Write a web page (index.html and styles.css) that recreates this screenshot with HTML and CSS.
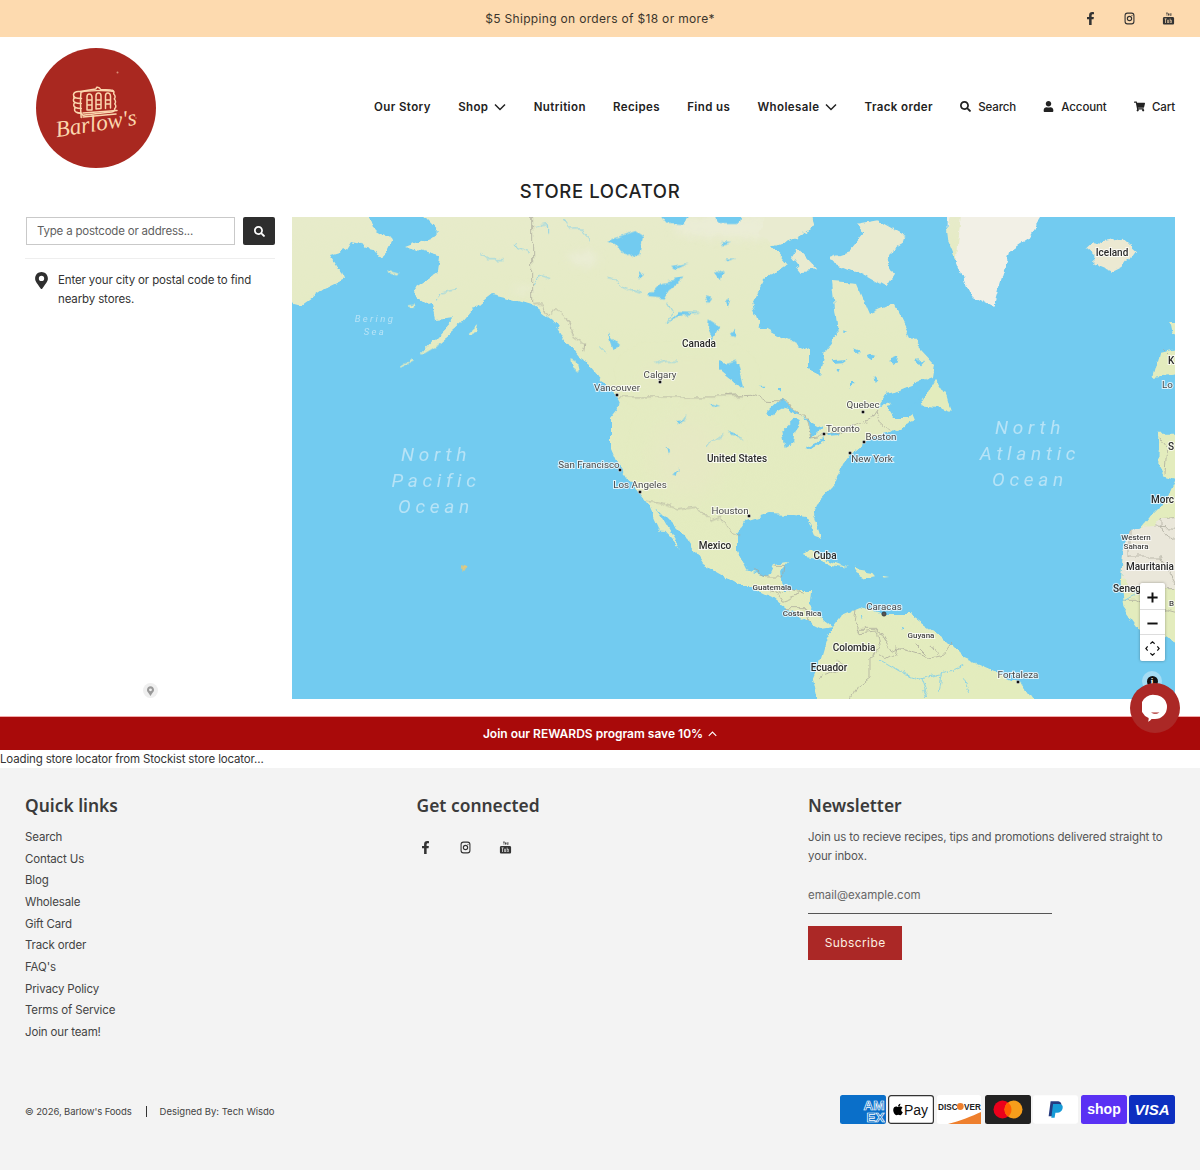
FILE: index.html
```html
<!DOCTYPE html>
<html lang="en">
<head>
<meta charset="utf-8">
<title>Store Locator – Barlow's Foods</title>
<link rel="stylesheet" href="styles.css">
</head>
<body>
<svg class="defs" width="0" height="0" aria-hidden="true">
  <symbol id="i-fb" viewBox="0 0 320 512"><path d="M279.14 288l14.22-92.66h-88.91v-60.13c0-25.35 12.42-50.06 52.24-50.06h40.42V6.26S260.43 0 225.36 0c-73.22 0-121.08 44.38-121.08 124.72v70.62H22.89V288h81.39v224h100.17V288z"/></symbol>
  <symbol id="i-ig" viewBox="0 0 20 20"><rect x="3.2" y="1.8" width="13.6" height="16.4" rx="3.6" fill="none" stroke="currentColor" stroke-width="1.7"/><circle cx="10" cy="10" r="3.3" fill="none" stroke="currentColor" stroke-width="1.7"/><circle cx="13.8" cy="5.4" r=".8"/></symbol>
  <symbol id="i-yt" viewBox="0 0 20 20"><path d="M6 .6l1.2 2.8v2.2h.9V3.4L9.3.6h-.9l-.7 1.8L7 .6zM10.4 2c-.7 0-1 .4-1 1v1.7c0 .6.3 1 1 1s1-.4 1-1V3c0-.6-.3-1-1-1zm1.8 0v3c0 .4.2.7.6.7.3 0 .6-.2.8-.5v.4h.8V2h-.8v2.9c-.2.2-.6.3-.6 0V2z"/><path fill-rule="evenodd" d="M3.6 7.6h12.8c1.3 0 2.2.9 2.2 2.2v7.4c0 1.3-.9 2.2-2.2 2.2H3.6c-1.3 0-2.2-.9-2.2-2.2V9.8c0-1.3.9-2.2 2.2-2.2zM4 10v1h1v6h1.1v-6h1v-1zm4 2v4.2c0 .7.8 1 1.7.2v.6h.9V12h-.9v3.7c-.3.3-.8.5-.8 0V12zm4-2v7h.9v-.4c.8.8 1.9.5 1.9-.6v-2.9c0-1.1-1.1-1.4-1.9-.6V10zm.9 3.400c.4-.3 1-.3 1 .3V16c0 .6-.6.6-1 .3z"/></symbol>
  <symbol id="i-search" viewBox="0 0 512 512"><path d="M505 442.7L405.3 343c-4.5-4.5-10.6-7-17-7H372c27.6-35.3 44-79.7 44-128C416 93.1 322.9 0 208 0S0 93.1 0 208s93.1 208 208 208c48.3 0 92.7-16.4 128-44v16.3c0 6.4 2.5 12.5 7 17l99.7 99.7c9.4 9.4 24.6 9.4 33.9 0l28.3-28.3c9.4-9.4 9.4-24.6.1-34zM208 336c-70.7 0-128-57.2-128-128 0-70.7 57.2-128 128-128 70.7 0 128 57.2 128 128 0 70.7-57.2 128-128 128z"/></symbol>
  <symbol id="i-user" viewBox="0 0 448 512"><path d="M224 256c70.7 0 128-57.3 128-128S294.7 0 224 0 96 57.3 96 128s57.3 128 128 128zm89.6 32h-16.7c-22.2 10.2-46.9 16-72.9 16s-50.6-5.8-72.9-16h-16.7C60.2 288 0 348.2 0 422.4V464c0 26.5 21.5 48 48 48h352c26.5 0 48-21.5 48-48v-41.6c0-74.2-60.2-134.4-134.4-134.4z"/></symbol>
  <symbol id="i-cart" viewBox="0 0 576 512"><path d="M528.12 301.319l47.273-208C578.806 78.301 567.391 64 551.99 64H159.208l-9.166-44.81C147.758 8.021 137.93 0 126.529 0H24C10.745 0 0 10.745 0 24v16c0 13.255 10.745 24 24 24h69.883l70.248 343.435C147.325 417.1 136 435.222 136 456c0 30.928 25.072 56 56 56s56-25.072 56-56c0-15.674-6.447-29.835-16.824-40h209.647C430.447 426.165 424 440.326 424 456c0 30.928 25.072 56 56 56s56-25.072 56-56c0-22.172-12.888-41.332-31.579-50.405l5.517-24.276c3.413-15.018-8.002-29.319-23.403-29.319H218.117l-6.545-32h293.145c11.206 0 20.92-7.754 23.403-18.681z"/></symbol>
  <symbol id="i-chev" viewBox="0 0 12 8"><path d="M1 1.5l5 5 5-5" fill="none" stroke="currentColor" stroke-width="1.5"/></symbol>
  <symbol id="i-pin" viewBox="0 0 384 512"><path fill-rule="evenodd" d="M172 502C27 291 0 269 0 192 0 86 86 0 192 0s192 86 192 192c0 77-27 99-172 310-10 14-30 14-40 0zm20-230a80 80 0 1 0 0-160 80 80 0 0 0 0 160z"/></symbol>
</svg>

<div class="announce">
  <p class="announce-text">$5 Shipping on orders of $18 or more*</p>
  <div class="announce-social">
    <svg class="ico"><use href="#i-fb"/></svg>
    <svg class="ico"><use href="#i-ig"/></svg>
    <svg class="ico"><use href="#i-yt"/></svg>
  </div>
</div>

<header class="site-header">
  <svg class="logo" viewBox="0 0 120 120" role="img" aria-label="Barlow's">
    <circle cx="60" cy="60" r="60" fill="#a92820"/>
    <g fill="none" stroke="#fbd6ae" stroke-width="1.5" stroke-linecap="round" stroke-linejoin="round">
      <path d="M44 43.500c-4-.5-6 .5-6.500 3-.2 1.500.5 2.500 1.500 3-2 1-2.300 4 0 5-2 1.500-1.500 4 .3 5-1.500 2-.8 4.500 1.700 5l4.500 1c.5 1.500 1.500 2 3 1.500l27-3c2.500-.5 3.500-1.500 3.200-3.500 1.500-1 1.500-3.500 0-4.500 1.300-1.500 1-4-.5-5 1.500-1.500 1-4-.5-5 .8-2.500-.5-4-3-4l-10-.5c-1-2-2.500-2.500-4-2.200l-1 1.800z"/>
      <path d="M38 49.500c3 .8 6 1 7.500 1M38.800 54.500c2 .8 4 1 6.500 1M39.300 59.500c2 .8 4 1 6 1M41 64.500l4.500 1M45 44c-.8 7-.5 17 .2 25.500M45.500 44c6-1.500 24-2 32-.5"/>
      <path d="M51 62V49c0-4 4.500-4 5 0v13zM60 61V48c0-4 5-4 5 0v12.500zM69.500 60.500V48c0-4 4.500-4 5 0v12M51 52h5M60 52h5M69.500 52h5M51 57h5M60 56.500h5M69.500 56h5M47 65l34-2.500M47 69l33-3"/>
    </g>
    <circle cx="81.500" cy="24.500" r="1" fill="#d98f76"/>
    <circle cx="100" cy="70" r=".7" fill="#d98f76"/>
    <text class="logo-word" x="60" y="83" transform="rotate(-9 60 76)">Barlow's</text>
  </svg>
  <nav class="main-nav">
    <a class="nav-link">Our Story</a>
    <a class="nav-link">Shop<svg class="nav-chev"><use href="#i-chev"/></svg></a>
    <a class="nav-link">Nutrition</a>
    <a class="nav-link">Recipes</a>
    <a class="nav-link">Find us</a>
    <a class="nav-link">Wholesale<svg class="nav-chev"><use href="#i-chev"/></svg></a>
    <a class="nav-link">Track order</a>
    <a class="nav-link tight"><svg class="nav-ico"><use href="#i-search"/></svg>Search</a>
    <a class="nav-link tight"><svg class="nav-ico"><use href="#i-user"/></svg>Account</a>
    <a class="nav-link tight"><svg class="nav-ico"><use href="#i-cart"/></svg>Cart</a>
  </nav>
</header>

<main class="locator">
  <h1 class="locator-title">STORE LOCATOR</h1>
  <div class="locator-body">
    <aside class="side">
      <form class="search-row">
        <input class="search-input" type="text" placeholder="Type a postcode or address...">
        <button class="search-btn" type="button" aria-label="Search"><svg class="search-btn-ico"><use href="#i-search"/></svg></button>
      </form>
      <div class="hint">
        <svg class="hint-pin"><use href="#i-pin"/></svg>
        <p class="hint-text">Enter your city or postal code to find nearby stores.</p>
      </div>
      <div class="side-foot"><span class="mini-pin"><svg class="mini-pin-ico"><use href="#i-pin"/></svg></span></div>
    </aside>
    <div class="map">
      <svg class="map-svg" viewBox="0 0 883 482" aria-label="Map of North America and the Atlantic">
        <defs>
          <linearGradient id="landGrad" gradientUnits="userSpaceOnUse" x1="0" y1="0" x2="0" y2="482">
            <stop offset="0" stop-color="#e7ebca"/><stop offset=".3" stop-color="#e4ebc2"/><stop offset="1" stop-color="#e3ecbd"/>
          </linearGradient>
          <filter id="rough" filterUnits="userSpaceOnUse" x="-20" y="-20" width="923" height="522" color-interpolation-filters="sRGB">
            <feTurbulence type="fractalNoise" baseFrequency=".07" numOctaves="4" seed="7" result="n"/>
            <feDisplacementMap in="SourceGraphic" in2="n" scale="9" xChannelSelector="R" yChannelSelector="G"/>
          </filter>
          <filter id="soft" x="-40%" y="-40%" width="180%" height="180%"><feGaussianBlur stdDeviation="4"/></filter>
          <filter id="softer" x="-40%" y="-40%" width="180%" height="180%"><feGaussianBlur stdDeviation="12"/></filter>
          <clipPath id="mainClip"><polygon points="123,-10 148,17 113,30 125,34 147,40 145,55 123,70 125,80 140,90 143,102 163,100 128,137 147,127 170,107 187,87 200,77 213,80 240,88 260,103 273,123 287,140 297,147 310,163 323,177 328,190 320,200 320,230 330,253 348,277 358,290 393,320 410,347 433,360 450,370 518,407 541,410 520,373 496,345 445,333 445,317 475,297 515,300 525,287 541,270 558,237 595,217 621,200 595,190 641,160 618,120 601,87 540,65 546,117 528,160 481,117 460,87 495,47 505,20 518,-10"/></clipPath>
        </defs>
        <rect class="water" width="883" height="482"/>
        <g filter="url(#rough)">
          <polygon class="land" points="-10,-10 72,-10 80,12 100,23 90,43 80,30 60,25 55,33 38,38 50,57 52,63 33,72 10,88 -10,83"/>
          <polygon class="land" points="123,-10 148,17 113,30 125,34 147,40 145,55 123,70 125,80 140,90 143,102 163,100 128,137 147,127 170,107 187,87 200,77 213,80 240,88 260,103 273,123 287,140 297,147 310,163 323,177 328,190 320,200 320,230 330,253 348,277 358,290 367,310 388,333 363,290 393,320 410,347 433,360 450,370 461,370 481,380 498,393 518,407 528,412 541,410 518,392 520,373 491,373 489,353 496,345 481,347 475,360 455,353 445,333 445,317 455,303 475,297 501,298 515,300 523,320 529,322 521,297 525,287 541,270 550,247 558,237 571,227 595,217 621,200 601,200 595,190 608,187 598,177 615,170 641,160 643,147 618,120 601,87 578,97 565,67 540,65 546,117 533,133 528,160 518,150 518,133 481,117 468,110 460,87 471,63 495,47 481,30 505,20 521,10 518,-10"/>
          <polygon class="land" points="541,410 533,425 527,445 520,462 526,492 748,492 731,467 701,453 671,440 651,420 618,397 591,397 568,390 551,397"/>
          <g clip-path="url(#mainClip)">
            <g class="tone-ice" filter="url(#soft)">
              <ellipse cx="292" cy="42" rx="16" ry="7"/><ellipse cx="232" cy="72" rx="12" ry="3"/><ellipse cx="440" cy="10" rx="60" ry="12"/>
            </g>
            <g class="tone-dry" filter="url(#softer)">
              <ellipse cx="395" cy="240" rx="35" ry="40"/><ellipse cx="395" cy="160" rx="50" ry="10"/>
            </g>
          </g>
          <g transform="translate(438,0) scale(.33333)">
            <polygon class="land pale" points="300,120 360,100 400,50 380,20 440,10 530,60 490,90 470,130 495,170 470,210 400,170 300,130"/>
            <polygon class="land pale" points="180,120 200,90 265,160 215,165"/>
            <polygon class="land pale" points="120,-30 230,-30 250,30 200,60 130,85 90,50"/>
            <polygon class="land" points="570,565 615,485 650,540 662,585 620,570"/>
            <polygon class="land" points="547,590 555,610 520,625 490,640 520,610"/>
            <polygon class="land" points="215,1015 250,1000 300,1030 352,1050 300,1040 260,1022"/>
            <polygon class="land" points="368,1055 430,1065 438,1075 400,1082 380,1072"/>
            <polygon class="land" points="455,1076 478,1080 458,1082"/>
            <polygon class="ice" points="650,30 650,-30 955,-30 900,60 840,100 810,200 790,270 720,235 680,130"/>
            <polygon class="land" points="650,30 675,-30 695,-30 680,130 655,70"/>
            <polygon class="pale-ice" points="1070,92 1092,72 1120,78 1180,68 1215,100 1180,150 1150,165 1090,140 1090,110"/>
            <polygon class="land" points="1270,480 1290,410 1360,395 1360,470"/>
            <polygon class="land" points="1318,315 1360,315 1360,360 1325,350"/>
            <polygon class="land" points="1285,650 1360,650 1360,792 1300,775 1282,740"/>
            <polygon class="land" points="1460,780 1335,795 1310,850 1270,890 1180,1000 1172,1100 1180,1170 1230,1240 1335,1275 1460,1300"/>
            <polygon class="ice-warm" points="1360,900 1290,905 1270,930 1200,935 1180,1000 1175,1080 1200,1115 1335,1115 1460,1115 1460,890"/>
            <g class="lakes">
              <polygon points="105,590 150,548 215,590 160,575 130,592"/>
              <polygon points="170,690 160,640 195,605 215,615 190,650 187,680"/>
              <polygon points="220,600 280,630 245,662 240,620"/>
              <polygon points="228,690 282,664 282,672 240,693"/>
              <polygon points="285,655 330,645 325,657 292,660"/>
              <polygon points="305,430 350,425 335,436 310,438"/><polygon points="410,412 436,416 428,434 414,430"/>
              <polygon points="478,428 505,418 500,440 485,442"/><polygon points="555,432 580,428 568,442"/>
              <polygon points="320,456 332,456 328,466"/><polygon points="430,478 442,490 434,498"/><polygon points="360,492 376,492 360,512"/>
              <polygon points="142,516 158,516 154,528"/><polygon points="86,506 106,506 102,514"/><polygon points="340,340 352,345 340,348"/><polygon points="370,396 390,404 375,408"/>
              <polygon points="-30,430 25,440 42,510 20,500 -30,460"/>
              <polygon points="390,1192 398,1200 392,1210"/><polygon points="515,1232 523,1236 519,1246"/>
            </g>
            <polygon class="water" points="440,575 470,530 540,515 590,520 560,560 520,585 490,585 480,555"/>
            <g class="border">
              <polyline points="-20,538 60,535 110,550 160,552 215,590 235,605 245,660 285,655 330,645 395,620 420,610 440,580 450,610 480,640"/>
              <polyline points="70,1060 110,1080 160,1080 165,1045 130,1045"/>
              <polyline points="100,1110 140,1125 165,1115 225,1125"/>
              <polyline points="140,1125 155,1150 210,1130"/>
              <polyline points="170,1175 225,1175 235,1220"/>
              <polyline points="375,1175 370,1210 390,1250 440,1245 450,1300 420,1320 420,1380"/>
              <polyline points="385,1240 445,1240 480,1300 500,1290 540,1300 600,1320 640,1310 670,1270"/>
              <polyline points="500,1290 495,1310 470,1325 450,1310"/>
              <polyline points="560,1280 590,1310"/>
              <polyline points="600,1280 620,1310"/>
              <polyline points="320,1330 350,1345 300,1370 270,1380"/>
              <polyline points="420,1380 380,1410 360,1460"/>
              <polyline points="1270,930 1360,935 1360,970"/><polyline points="1360,900 1290,905 1290,935 1335,970"/>
              <polyline points="1200,935 1200,1020 1290,1020 1335,1100"/><polyline points="1175,1115 1360,1115"/>
              <polyline points="1180,1150 1220,1150 1245,1165 1360,1195"/>
              <polyline points="1290,660 1310,690 1305,770"/><polyline points="1300,400 1320,420"/>
            </g>
            <g class="river">
              <polyline points="450,1330 510,1365 570,1385 640,1370 700,1345"/>
              <polyline points="640,1370 630,1420"/><polyline points="570,1385 590,1440"/><polyline points="700,1390 720,1425"/>
              <polyline points="1175,1120 1230,1130 1180,1150"/>
            </g>
          </g>
          <g transform="scale(.33333)">
            <g class="lakes">
              <polygon points="945,72 1030,42 1056,60 1048,110 1000,120 975,90"/>
              <polygon points="1068,240 1110,195 1178,180 1130,218 1115,245"/>
              <polygon points="1128,310 1160,285 1220,288 1160,298"/>
              <polygon points="1288,440 1332,428 1348,510 1322,480"/>
              <polygon points="1085,-30 1205,-30 1180,25 1120,20"/><polygon points="1260,-30 1350,-30 1340,15 1280,15"/>
              <polygon points="1275,170 1295,160 1290,190"/><polygon points="1040,160 1060,170 1045,180"/><polygon points="1140,150 1190,140 1150,158"/>
              <polygon points="1235,240 1255,245 1245,258"/><polygon points="1305,250 1320,245 1310,275"/><polygon points="1250,310 1282,330 1262,370 1248,340"/>
              <polygon points="1310,355 1330,335 1325,360"/><polygon points="1285,75 1315,78 1290,85"/><polygon points="1300,125 1330,125 1310,132"/>
              <polygon points="950,350 985,385 965,395"/><polygon points="1120,690 1135,700 1128,708"/><polygon points="1140,775 1158,755 1150,778"/>
              <polygon points="1255,560 1285,570 1265,572"/><polygon points="1150,610 1180,605 1155,618"/>
              <polygon points="1310,645 1350,665 1325,660"/><polygon points="965,530 985,560 980,575 965,545"/>
            </g>
            <g class="river">
              <polyline points="815,10 830,30 860,30 895,70"/><polyline points="672,75 680,95 705,110"/><polyline points="565,110 590,125 635,125"/>
              <polyline points="945,180 970,185 990,210 1050,230"/><polyline points="730,25 770,20 770,50"/><polyline points="725,205 740,175 775,185"/>
              <polyline points="435,245 445,225 495,215"/><polyline points="1125,260 1140,285 1128,310"/><polyline points="925,395 940,412"/>
              <polyline points="1085,440 1120,430 1155,430"/><polyline points="1150,620 1180,600"/><polyline points="1245,690 1300,650"/>
            </g>
            <polygon class="land" points="285,160 320,170 315,176 290,168"/>
            <polygon class="land" points="530,345 562,315 555,345 535,352"/>
            <polygon class="land" points="385,412 430,380 440,385 395,412"/>
            <polygon class="land" points="325,447 355,428 360,432 330,449"/>
            <polygon class="land" points="835,423 850,430 858,465 840,450"/>
            <polygon class="hawaii" points="510,1050 524,1058 512,1065"/>
            <polygon class="land" points="350,262 368,260 370,272 355,272"/>
            <g class="border">
              <polyline points="722,-30 722,258"/>
              <polyline points="722,260 745,258 770,295 795,275 820,300 850,360 878,375 875,405"/>
              <polyline points="975,540 1350,540"/>
              <polyline points="1062,850 1100,855 1160,873 1215,865 1255,910 1285,898 1320,950 1345,960"/>
            </g>
          </g>
        </g>
        <text class="ocean ocean-sm" x="83" y="105">Bering</text>
        <text class="ocean ocean-sm" x="83" y="118">Sea</text>
        <text class="ocean" x="144" y="244">North</text>
        <text class="ocean" x="144" y="270">Pacific</text>
        <text class="ocean" x="144" y="296">Ocean</text>
        <text class="ocean" x="738" y="217">North</text>
        <text class="ocean" x="738" y="243">Atlantic</text>
        <text class="ocean" x="738" y="269">Ocean</text>
        <text class="country" x="407" y="130">Canada</text>
        <text class="country" x="445" y="245">United States</text>
        <text class="country" x="423" y="332">Mexico</text>
        <text class="country" x="533" y="342">Cuba</text>
        <text class="country" x="820" y="39">Iceland</text>
        <text class="country" x="562" y="434">Colombia</text>
        <text class="country" x="537" y="454">Ecuador</text>
        <text class="country" x="858" y="353">Mauritania</text>
        <text class="country start" x="821" y="375">Seneg</text>
        <text class="country start" x="859" y="286">Morc</text>
        <text class="country start" x="876" y="147">K</text>
        <text class="country start" x="876" y="233">S</text>
        <text class="country small start" x="877" y="389">B</text>
        <text class="country small" x="480" y="373">Guatemala</text>
        <text class="country small" x="510" y="399">Costa Rica</text>
        <text class="country small" x="629" y="421">Guyana</text>
        <text class="country small" x="844" y="323">Western</text>
        <text class="country small" x="844" y="332">Sahara</text>
        <text class="city" x="368" y="161">Calgary</text>
        <text class="city" x="325" y="174">Vancouver</text>
        <text class="city" x="297" y="251">San Francisco</text>
        <text class="city" x="348" y="271">Los Angeles</text>
        <text class="city" x="438" y="297">Houston</text>
        <text class="city" x="571" y="191">Quebec</text>
        <text class="city" x="551" y="215">Toronto</text>
        <text class="city" x="589" y="223">Boston</text>
        <text class="city" x="580" y="245">New York</text>
        <text class="city" x="592" y="393">Caracas</text>
        <text class="city" x="726" y="461">Fortaleza</text>
        <text class="city start" x="870" y="171">Lo</text>
        <g class="dots">
          <circle cx="368" cy="165" r="1.8"/><circle cx="325" cy="178" r="1.8"/><circle cx="328" cy="253" r="1.8"/><circle cx="348" cy="275" r="1.8"/>
          <circle cx="457" cy="299" r="1.8"/><circle cx="571" cy="195" r="1.8"/><circle cx="532" cy="217" r="1.8"/><circle cx="572" cy="225" r="1.8"/>
          <circle cx="558" cy="236" r="1.8"/><circle cx="726" cy="465" r="1.8"/>
          <circle class="capital" cx="592" cy="397" r="2.2"/>
        </g>
      </svg>
      <div class="map-ctrl">
        <button class="map-btn" type="button" aria-label="Zoom in"><svg class="map-btn-ico" viewBox="0 0 14 14"><path d="M7 1.500v11M1.500 7h11"/></svg></button>
        <button class="map-btn" type="button" aria-label="Zoom out"><svg class="map-btn-ico" viewBox="0 0 14 14"><path d="M1.500 7h11"/></svg></button>
        <button class="map-btn" type="button" aria-label="Reset"><svg class="map-btn-ico fine" viewBox="0 0 14 14"><path d="M5 2.500L7 .8l2 1.700M5 11.500l2 1.700 2-1.700M2.500 5L.8 7l1.700 2M11.500 5l1.700 2-1.700 2"/></svg></button>
      </div>
      <span class="map-info"><span class="map-info-dot">i</span></span>
    </div>
  </div>
</main>

<div class="rewards">Join our REWARDS program save 10%<svg class="rewards-chev"><use href="#i-chev"/></svg></div>
<p class="loading">Loading store locator from Stockist store locator...</p>

<footer class="site-footer">
  <div class="foot-cols">
    <section class="foot-col">
      <h3 class="foot-h">Quick links</h3>
      <ul class="foot-links">
        <li>Search</li><li>Contact Us</li><li>Blog</li><li>Wholesale</li><li>Gift Card</li><li>Track order</li><li>FAQ's</li><li>Privacy Policy</li><li>Terms of Service</li><li>Join our team!</li>
      </ul>
    </section>
    <section class="foot-col">
      <h3 class="foot-h">Get connected</h3>
      <div class="foot-social">
        <svg class="ico"><use href="#i-fb"/></svg>
        <svg class="ico"><use href="#i-ig"/></svg>
        <svg class="ico"><use href="#i-yt"/></svg>
      </div>
    </section>
    <section class="foot-col">
      <h3 class="foot-h">Newsletter</h3>
      <p class="foot-p">Join us to recieve recipes, tips and promotions delivered straight to your inbox.</p>
      <input class="foot-input" type="email" placeholder="email@example.com">
      <button class="foot-btn" type="button">Subscribe</button>
    </section>
  </div>
  <div class="foot-bottom">
    <p class="legal"><span class="legal-a">© 2026, Barlow's Foods</span><span class="legal-b">Designed By: Tech Wisdo</span></p>
    <div class="pays">
      <svg class="pay" viewBox="0 0 46 29"><rect width="46" height="29" rx="2.5" fill="#0a6fc9"/><text class="pay-amex"><tspan x="44.5" y="14.500">AM</tspan><tspan x="44.5" y="26.500">EX</tspan></text></svg>
      <svg class="pay" viewBox="0 0 46 29"><rect x=".6" y=".6" width="44.8" height="27.8" rx="2.5" fill="#fff" stroke="#333" stroke-width="1.2"/><svg x="5" y="8" width="10" height="13" viewBox="0 0 384 512"><path d="M318.7 268.7c-.2-36.7 16.4-64.4 50-84.8-18.8-26.9-47.2-41.7-84.7-44.6-35.5-2.8-74.3 20.7-88.5 20.7-15 0-49.4-19.7-76.4-19.7C63.3 141.2 4 184.8 4 273.5q0 39.3 14.4 81.2c12.8 36.7 59 126.7 107.2 125.2 25.2-.6 43-17.9 75.8-17.9 31.8 0 48.3 17.9 76.4 17.9 48.6-.7 90.4-82.5 102.6-119.3-65.2-30.7-61.7-90-61.7-91.9zm-56.6-164.2c27.3-32.4 24.8-61.9 24-72.5-24.1 1.4-52 16.4-67.9 34.9-17.5 19.8-27.8 44.3-25.6 71.9 26.1 2 49.9-11.4 69.5-34.3z"/></svg><text class="pay-apple" x="16" y="20">Pay</text></svg>
      <svg class="pay pay-narrow" viewBox="0 0 44 29"><rect width="44" height="29" rx="2.5" fill="#fff"/><path d="M11 29c12-3 24-8 33-12v12z" fill="#ee7f2d"/><text class="pay-disc" x="1" y="14.5">DISC</text><circle cx="23.3" cy="11.5" r="3.4" fill="#ee7f2d"/><text class="pay-disc" x="27" y="14.5">VER</text></svg>
      <svg class="pay" viewBox="0 0 46 29"><rect width="46" height="29" rx="2.5" fill="#222"/><circle cx="17.5" cy="14.5" r="9" fill="#eb001b"/><circle cx="28.5" cy="14.5" r="9" fill="#f79e1b"/><path d="M23 7.400a9 9 0 0 1 0 14.200 9 9 0 0 1 0-14.200z" fill="#ff5f00"/></svg>
      <svg class="pay pay-paypal" viewBox="0 0 46 29"><rect width="46" height="29" rx="2.5" fill="#fff"/><path d="M18 6h6.500c3.500 0 5 1.800 4.400 4.600-.7 3.300-3 4.900-6 4.900h-2l-.9 6H16z" fill="#253b80"/><path d="M20.500 9h6c3.200 0 4.400 1.700 3.800 4.300-.6 3-2.700 4.500-5.500 4.500h-1.900l-.8 5.200h-3.400z" fill="#179bd7"/></svg>
      <svg class="pay" viewBox="0 0 46 29"><rect width="46" height="29" rx="2.5" fill="#5a31f4"/><text class="pay-shop" x="23" y="19">shop</text></svg>
      <svg class="pay" viewBox="0 0 46 29"><rect width="46" height="29" rx="2.5" fill="#0d2fc0"/><text class="pay-visa" x="23" y="20">VISA</text></svg>
    </div>
  </div>
</footer>

<button class="chat" type="button" aria-label="Open chat">
  <svg class="chat-ico" viewBox="0 0 26 28"><path d="M13 1a12 12 0 0 1 0 24H9.500c-1 1.500-2.200 2.300-3.500 2.700.6-1.200.8-2.300.6-3.700A12 12 0 0 1 13 1z" fill="#fff"/><path d="M9 18.500c2.500 1.800 6 1.800 8.500 0z" fill="#ab2826"/></svg>
</button>
</body>
</html>
```
FILE: styles.css
```css
* { box-sizing: border-box; }
html, body { margin: 0; padding: 0; }
body {
  position: relative;
  width: 1200px;
  height: 1170px;
  overflow: hidden;
  background: #fff;
  color: #333;
  font-family: Inter, "Liberation Sans", sans-serif;
  font-size: 12px;
}
p, h1, h3, ul { margin: 0; padding: 0; }
.defs { position: absolute; }
.ico { width: 13px; height: 13px; fill: currentColor; color: #333; display: block; }

/* announcement */
.announce {
  position: relative;
  height: 37px;
  background: #fddaaf;
  display: flex;
  align-items: center;
  justify-content: center;
}
.announce-text { font-size: 12px; letter-spacing: .32px; color: #3c352c; }
.announce-social {
  position: absolute;
  right: 25px;
  top: 12px;
  display: flex;
  gap: 26px;
}

/* header */
.site-header {
  height: 141px;
  display: flex;
  align-items: center;
  justify-content: space-between;
  padding: 0 25px 0 36px;
}
.logo { width: 120px; height: 120px; display: block; }
.logo-word {
  font-family: "Liberation Serif", serif;
  font-style: italic;
  font-size: 23px;
  fill: #fbd6ae;
  text-anchor: middle;
}
.main-nav { display: flex; align-items: center; gap: 27.2px; transform: translateY(-1px); }
.nav-link {
  display: flex;
  align-items: center;
  font-size: 11.5px;
  font-weight: 600;
  letter-spacing: .4px;
  color: #222;
  white-space: nowrap;
}
.nav-link.tight { letter-spacing: -.1px; font-weight: 500; }
.nav-chev { width: 12px; height: 8px; margin-left: 6px; color: #222; }
.nav-ico { width: 11px; height: 11px; margin-right: 7px; fill: #222; }

/* locator */
.locator { height: 538px; }
.locator-title {
  height: 39px;
  text-align: center;
  font-size: 18.5px;
  line-height: 26px;
  font-weight: 500;
  letter-spacing: .65px;
  color: #222;
}
.locator-body { display: flex; padding: 0 25px; gap: 17px; height: 482px; }
.side { width: 250px; display: flex; flex-direction: column; }
.search-row {
  display: flex;
  justify-content: space-between;
  padding: 0 0 13px 1px;
  border-bottom: 1px solid #eee;
  margin: 0;
}
.search-input {
  width: 209px;
  height: 28px;
  border: 1px solid #c9c9c9;
  padding: 0 10px;
  font: 11.5px Inter, "Liberation Sans", sans-serif;
  letter-spacing: -.2px;
  color: #333;
  background: #fff;
  outline: 0;
}
.search-input::placeholder { color: #5f5f5f; opacity: 1; }
.search-btn {
  width: 32px;
  height: 28px;
  background: #2e2e2e;
  border: 0;
  border-radius: 2px;
  padding: 0;
  display: flex;
  align-items: center;
  justify-content: center;
}
.search-btn-ico { width: 11px; height: 11px; fill: #fff; }
.hint { display: flex; padding: 12px 0 0 10px; gap: 10px; }
.hint-pin { width: 13px; height: 17px; fill: #2f2f2f; flex: none; margin-top: 1px; }
.hint-text { font-size: 11.5px; letter-spacing: -.13px; line-height: 19px; color: #333; width: 196px; }
.side-foot { margin-top: auto; display: flex; justify-content: center; padding-bottom: 1px; }
.mini-pin {
  width: 15px; height: 15px; border-radius: 50%; background: #efefef;
  display: flex; align-items: center; justify-content: center;
}
.mini-pin-ico { width: 7px; height: 10px; fill: #999; }

/* map */
.map { position: relative; width: 883px; height: 482px; }
.map-svg { display: block; width: 883px; height: 482px; overflow: hidden; font-family: Roboto, "Liberation Sans", sans-serif; }
.water { fill: #72cbf0; }
.land { fill: url(#landGrad); stroke: none; }
.land.pale { fill: #e9ebd0; }
.ice { fill: #f2f0e6; }
.pale-ice { fill: #ece9d2; }
.ice-warm { fill: #eae7da; }
.hawaii { fill: #e3c97c; }
.tone-ice ellipse { fill: #efeee0; opacity: .55; }
.tone-dry ellipse { fill: #eae8c8; opacity: .5; }
.lakes polygon { fill: #72cbf0; }
.border polyline { fill: none; stroke: #a9a79a; stroke-width: 2.2; }
.river polyline { fill: none; stroke: #72cbf0; stroke-width: 2.2; }
.ocean {
  fill: #b7e3f6;
  font-size: 19px;
  font-style: italic;
  letter-spacing: 4.7px;
  text-anchor: middle;
}
.ocean-sm { font-size: 9.5px; letter-spacing: 2.4px; }
.country, .city {
  text-anchor: middle;
  paint-order: stroke;
  stroke: rgba(255,255,255,.75);
  stroke-width: 2px;
}
.country.start, .city.start { text-anchor: start; }
.country { font-size: 10px; font-weight: 500; fill: #2a2a2a; }
.country.small { font-size: 8px; fill: #444; }
.city { font-size: 9.8px; fill: #4a4a4a; }
.dots circle { fill: #111; stroke: #fff; stroke-width: .5; }
.dots .capital { fill: #555; stroke: #222; }
.map-ctrl {
  position: absolute;
  left: 848px;
  top: 366px;
  width: 25px;
  background: #fff;
  border-radius: 2px;
  box-shadow: 0 0 3px rgba(0,0,0,.35);
  display: flex;
  flex-direction: column;
}
.map-btn {
  height: 25px;
  background: transparent;
  border: 0;
  border-bottom: 1px solid #ddd;
  padding: 2px 0 0;
  display: flex;
  align-items: center;
  justify-content: center;
}
.map-btn:first-child { height: 27px; padding-top: 3px; }
.map-btn:last-child { height: 26px; border-bottom: 0; padding: 0; }
.map-btn-ico { width: 13px; height: 13px; fill: none; stroke: #111; stroke-width: 2.1; }
.map-btn-ico.fine { width: 15px; height: 15px; stroke-width: 1.1; }
.map-info {
  position: absolute;
  left: 850px;
  top: 454px;
  width: 20px;
  height: 20px;
  border-radius: 50%;
  background: #a5dcf3;
  display: flex;
  align-items: center;
  justify-content: center;
}
.map-info-dot {
  width: 11px; height: 11px; border-radius: 50%;
  background: #111; color: #fff;
  font: 700 9px/11px "Liberation Serif", serif;
  text-align: center;
}

/* rewards */
.rewards {
  height: 34px;
  background: #a90a0a;
  border-top: 1px solid #f3a9a9;
  color: #fff;
  font-size: 12px;
  font-weight: 600;
  display: flex;
  align-items: center;
  justify-content: center;
}
.rewards-chev { width: 9px; height: 6px; margin-left: 5px; color: #fff; transform: rotate(180deg); }
.loading { height: 18px; line-height: 18px; font-size: 11.5px; letter-spacing: -.15px; color: #333; }

/* footer */
.site-footer { height: 402px; background: #f3f3f3; padding: 0 25px; position: relative; }
.foot-cols { display: flex; height: 290px; padding-top: 25px; }
.foot-col { width: 391.67px; }
.foot-col:last-child { width: 367px; }
.foot-h {
  font-family: "Noto Sans", "Liberation Sans", sans-serif;
  font-size: 17.4px;
  font-weight: 600;
  line-height: 24px;
  color: #3b3b3b;
}
.foot-links { list-style: none; margin-top: 10px; }
.foot-links li { height: 21.67px; line-height: 21.67px; font-size: 11.5px; letter-spacing: -.15px; color: #444; }
.foot-social { display: flex; gap: 27px; margin-top: 24px; padding-left: 2px; }
.foot-p { margin-top: 11px; font-size: 11.5px; letter-spacing: -.15px; line-height: 19px; color: #555; }
.foot-input {
  display: block;
  width: 244px;
  height: 38px;
  margin-top: 10px;
  border: 0;
  border-bottom: 1px solid #555;
  background: transparent;
  padding: 0;
  font: 11.5px Inter, "Liberation Sans", sans-serif;
  outline: 0;
}
.foot-input::placeholder { color: #666; opacity: 1; }
.foot-btn {
  display: block;
  width: 94px;
  height: 34px;
  margin-top: 12px;
  padding: 0 0 1px;
  background: #ab2826;
  border: 0;
  color: #fdeee0;
  font: 12px Inter, "Liberation Sans", sans-serif;
  letter-spacing: .4px;
}
.foot-bottom {
  display: flex;
  justify-content: space-between;
  align-items: center;
  height: 30px;
  margin-top: 36px;
}
.legal { display: flex; font-size: 9.5px; letter-spacing: -.1px; color: #444; padding-top: 4px; }
.legal-a { padding-right: 14px; border-right: 1px solid #333; margin-right: 13px; }
.legal-b { letter-spacing: 0; }
.pays { display: flex; gap: 2px; }
.pay { width: 46px; height: 29px; display: block; font-family: "Liberation Sans", sans-serif; }
.pay-narrow { width: 44px; margin: 0 2px 0 1px; }
.pay-paypal { width: 45px; margin-right: 1px; }
.pay-amex { fill: #0a6fc9; stroke: #fff; stroke-width: .7px; font-size: 13.5px; font-weight: 700; text-anchor: end; }
.pay-apple { font-size: 14px; fill: #111; }
.pay-disc { font-size: 8.2px; font-weight: 700; fill: #222; }
.pay-shop { fill: #fff; font-size: 14px; font-weight: 700; text-anchor: middle; }
.pay-visa { fill: #fff; font-size: 15px; font-weight: 700; font-style: italic; text-anchor: middle; }

/* chat */
.chat {
  position: absolute;
  left: 1130px;
  top: 683px;
  width: 50px;
  height: 50px;
  border-radius: 50%;
  border: 0;
  padding: 0;
  background: #ab2826;
  display: flex;
  align-items: center;
  justify-content: center;
}
.chat-ico { width: 26px; height: 28px; }
```
